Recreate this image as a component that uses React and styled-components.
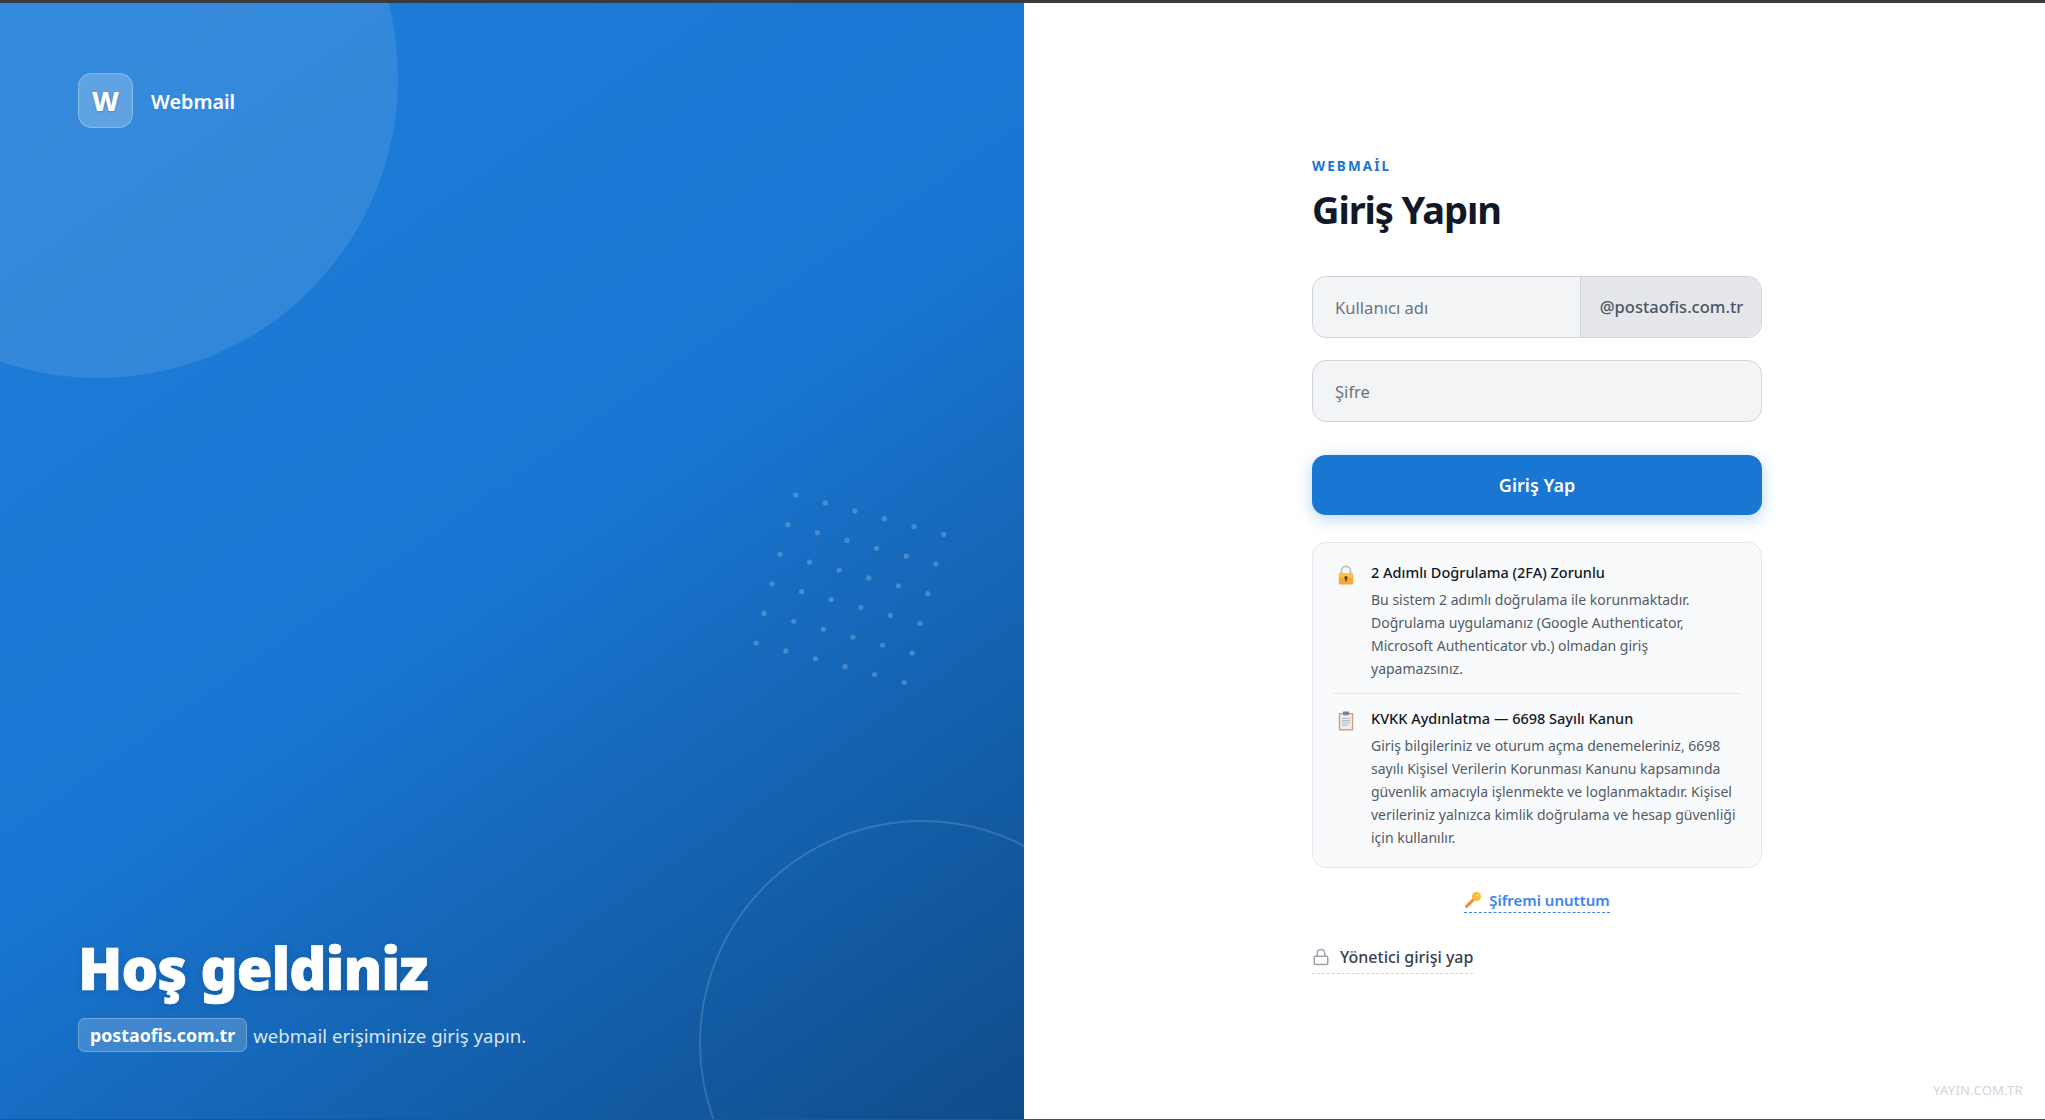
import styled, { createGlobalStyle } from 'styled-components';

const GlobalStyle = createGlobalStyle`
  * {
    box-sizing: border-box;
  }

  html,
  body {
    margin: 0;
    padding: 0;
    background: #fff;
  }

  body {
    font-family: 'Noto Sans', 'Open Sans', sans-serif;
  }
`;

const Page = styled.div`
  display: flex;
  flex-direction: column;
  height: 100vh;
  overflow: hidden;
`;

const TopStrip = styled.div`
  flex: none;
  height: 3px;
  background: #3a3b3c;
`;

const BottomStrip = styled.div`
  flex: none;
  height: 1px;
  background: #3f5a2c;
`;

const Split = styled.main`
  flex: 1;
  display: flex;
  min-height: 0;
`;

const Hero = styled.section`
  position: relative;
  flex: none;
  width: 1024px;
  display: flex;
  flex-direction: column;
  justify-content: space-between;
  padding: 70px 78px 67px;
  overflow: hidden;
  color: #fff;
  background: linear-gradient(145deg, #1e7ed9 0%, #1976d2 50%, #0f4c8a 100%);
`;

const BigCircle = styled.div`
  position: absolute;
  top: -225px;
  left: -202px;
  width: 600px;
  height: 600px;
  border-radius: 50%;
  background: rgba(255, 255, 255, 0.1);
`;

const RingCircle = styled.div`
  position: absolute;
  top: 817px;
  left: 699px;
  width: 446px;
  height: 446px;
  border-radius: 50%;
  border: 2px solid rgba(255, 255, 255, 0.15);
`;

const Dots = styled.svg`
  position: absolute;
  top: 467px;
  left: 730px;
  width: 240px;
  height: 230px;
`;

const Brand = styled.div`
  position: relative;
  display: flex;
  align-items: center;
  gap: 18px;
`;

const LogoBox = styled.div`
  width: 55px;
  height: 55px;
  display: flex;
  align-items: center;
  justify-content: center;
  border-radius: 14px;
  border: 1.5px solid rgba(255, 255, 255, 0.25);
  background: rgba(255, 255, 255, 0.22);
  font-size: 27px;
  font-weight: 800;
  text-shadow: 0 1px 3px rgba(0, 0, 0, 0.2);
`;

const BrandName = styled.span`
  padding-top: 2px;
  font-size: 19.8px;
  font-weight: 600;
`;

const Welcome = styled.div`
  position: relative;
`;

const WelcomeTitle = styled.h1`
  margin: 0 0 12px;
  font-size: 58px;
  line-height: 76px;
  font-weight: 900;
  letter-spacing: -1px;
  -webkit-text-stroke: 0.7px #fff;
  text-shadow: 0 2px 8px rgba(0, 0, 0, 0.15);
`;

const WelcomeText = styled.p`
  display: flex;
  align-items: center;
  gap: 6px;
  margin: 0;
  font-size: 18.6px;
  color: rgba(255, 255, 255, 0.85);
`;

const DomainPill = styled.span`
  padding: 4px 11px;
  border-radius: 7px;
  border: 1px solid rgba(255, 255, 255, 0.25);
  background: rgba(255, 255, 255, 0.18);
  font-size: 17.8px;
  font-weight: 700;
  color: #fff;
`;

const FormSide = styled.section`
  position: relative;
  flex: 1;
  display: flex;
  justify-content: center;
  padding: 154px 0 0 5px;
  background: #fff;
`;

const Form = styled.form`
  width: 450px;
`;

const Eyebrow = styled.div`
  font-size: 13.5px;
  line-height: 18px;
  font-weight: 700;
  letter-spacing: 2.1px;
  color: #1976d2;
`;

const Title = styled.h2`
  margin: 6px 0 38.5px;
  font-size: 38px;
  line-height: 56px;
  font-weight: 700;
  letter-spacing: -1.1px;
  color: #111827;
`;

const Field = styled.div`
  display: flex;
  height: 62px;
  margin-bottom: 22px;
  border-radius: 14px;
  border: 1.5px solid #d1d5db;
  background: #f3f4f6;
  overflow: hidden;
`;

const Input = styled.input`
  flex: 1;
  min-width: 0;
  padding: 2px 22px 0;
  border: 0;
  outline: 0;
  background: transparent;
  font-family: inherit;
  font-size: 16.6px;
  color: #111827;

  &::placeholder {
    color: #6b7280;
    opacity: 1;
  }
`;

const DomainSuffix = styled.div`
  flex: none;
  width: 181px;
  display: flex;
  align-items: center;
  justify-content: center;
  padding-left: 1px;
  border-left: 1.5px solid #d1d5db;
  background: #e5e7eb;
  font-size: 16.5px;
  font-weight: 500;
  color: #4b5563;
`;

const SubmitButton = styled.button`
  display: block;
  width: 100%;
  height: 60px;
  margin-top: 33px;
  border: 0;
  border-radius: 14px;
  background: #1976d2;
  box-shadow: 0 4px 16px rgba(25, 118, 210, 0.3);
  font-family: inherit;
  font-size: 18px;
  font-weight: 600;
  color: #fff;
`;

const NoticeCard = styled.div`
  margin-top: 27px;
  padding: 16px 20px 18px;
  border-radius: 14px;
  border: 1.5px solid #e5e7eb;
  background: #f9fafb;
`;

const Notice = styled.div`
  display: flex;
  gap: 16px;
  padding: ${props => (props.$first ? '2px 0 13px' : '13px 0 0')};
  border-top: ${props => (props.$first ? '0' : '1px solid #e5e7eb')};
`;

const NoticeIcon = styled.svg`
  flex: none;
  width: 18px;
  height: 20px;
  margin: 4px 0 0 4px;
`;

const NoticeTitle = styled.div`
  margin-bottom: 5px;
  font-size: 14.5px;
  line-height: 22px;
  font-weight: 500;
  color: #111827;
`;

const NoticeBody = styled.p`
  margin: 0;
  font-size: 14px;
  line-height: 23px;
  color: #525a68;
`;

const ForgotRow = styled.div`
  display: flex;
  justify-content: center;
  margin-top: 22px;
`;

const ForgotLink = styled.a`
  display: flex;
  align-items: center;
  gap: 7px;
  padding-bottom: 2px;
  border-bottom: 1.5px dashed #4080f5;
  font-size: 15px;
  font-weight: 600;
  color: #4080f5;
`;

const KeyIcon = styled.svg`
  width: 18px;
  height: 18px;
`;

const AdminRow = styled.div`
  display: flex;
  margin-top: 33px;
`;

const AdminLink = styled.a`
  display: flex;
  align-items: center;
  gap: 10px;
  padding-bottom: 5px;
  border-bottom: 1.5px dashed #d1d5db;
  font-size: 16px;
  font-weight: 500;
  color: #374151;
`;

const LockIcon = styled.svg`
  width: 18px;
  height: 18px;
  fill: none;
  stroke: #9ca3af;
  stroke-width: 2;
  stroke-linecap: round;
  stroke-linejoin: round;
`;

const Credit = styled.div`
  position: absolute;
  right: 22px;
  bottom: 20px;
  font-size: 13px;
  letter-spacing: 0.3px;
  color: #d1d5db;
`;

const dotPoints = [];
for (let row = 0; row < 6; row += 1) {
  for (let col = 0; col < 6; col += 1) {
    dotPoints.push({
      key: `${row}-${col}`,
      cx: 65.7 + col * 29.6 - row * 7.9,
      cy: 25 + col * 7.9 + row * 29.6,
    });
  }
}

function PadlockEmoji() {
  return (
    <NoticeIcon viewBox="0 0 20 22">
      <path d="M5 10V6.5a5 5 0 0 1 10 0V10" fill="none" stroke="#b9bdc4" strokeWidth="2" />
      <rect x="2" y="9" width="16" height="12.5" rx="1" fill="#f7a83a" />
      <rect x="2" y="9" width="16" height="5" rx="1" fill="#fbc344" />
      <circle cx="10" cy="14" r="1.8" fill="#5b3a16" />
      <rect x="9.2" y="14" width="1.6" height="4" fill="#5b3a16" />
    </NoticeIcon>
  );
}

function ClipboardEmoji() {
  return (
    <NoticeIcon viewBox="0 0 20 22">
      <rect x="2" y="2" width="16" height="19.5" rx="1" fill="#d99a73" />
      <rect x="3.5" y="3.5" width="13" height="16.5" fill="#eceef0" />
      <rect x="6.5" y="0.5" width="7" height="4" rx="1" fill="#7d8590" />
      <path d="M5.5 8h9M5.5 10.5h9M5.5 13h9M5.5 15.5h7" stroke="#a9afb8" strokeWidth="1" />
    </NoticeIcon>
  );
}

export default function App() {
  return (
    <>
      <GlobalStyle />
      <Page>
        <TopStrip />
        <Split>
          <Hero>
            <BigCircle />
            <RingCircle />
            <Dots viewBox="0 0 240 230">
              {dotPoints.map(dot => (
                <circle
                  key={dot.key}
                  cx={dot.cx}
                  cy={dot.cy}
                  r="2.6"
                  fill="rgba(255, 255, 255, 0.22)"
                />
              ))}
            </Dots>
            <Brand>
              <LogoBox>W</LogoBox>
              <BrandName>Webmail</BrandName>
            </Brand>
            <Welcome>
              <WelcomeTitle>Hoş geldiniz</WelcomeTitle>
              <WelcomeText>
                <DomainPill>postaofis.com.tr</DomainPill>
                webmail erişiminize giriş yapın.
              </WelcomeText>
            </Welcome>
          </Hero>
          <FormSide>
            <Form>
              <Eyebrow>WEBMAİL</Eyebrow>
              <Title>Giriş Yapın</Title>
              <Field>
                <Input placeholder="Kullanıcı adı" />
                <DomainSuffix>@postaofis.com.tr</DomainSuffix>
              </Field>
              <Field>
                <Input type="password" placeholder="Şifre" />
              </Field>
              <SubmitButton type="button">Giriş Yap</SubmitButton>
              <NoticeCard>
                <Notice $first>
                  <PadlockEmoji />
                  <div>
                    <NoticeTitle>2 Adımlı Doğrulama (2FA) Zorunlu</NoticeTitle>
                    <NoticeBody>
                      Bu sistem 2 adımlı doğrulama ile korunmaktadır. Doğrulama
                      uygulamanız (Google Authenticator, Microsoft Authenticator
                      vb.) olmadan giriş yapamazsınız.
                    </NoticeBody>
                  </div>
                </Notice>
                <Notice>
                  <ClipboardEmoji />
                  <div>
                    <NoticeTitle>KVKK Aydınlatma — 6698 Sayılı Kanun</NoticeTitle>
                    <NoticeBody>
                      Giriş bilgileriniz ve oturum açma denemeleriniz, 6698
                      sayılı Kişisel Verilerin Korunması Kanunu kapsamında
                      güvenlik amacıyla işlenmekte ve loglanmaktadır. Kişisel
                      verileriniz yalnızca kimlik doğrulama ve hesap güvenliği
                      için kullanılır.
                    </NoticeBody>
                  </div>
                </Notice>
              </NoticeCard>
              <ForgotRow>
                <ForgotLink>
                  <KeyIcon viewBox="0 0 18 18">
                    <path d="M11 7L2.5 15.5" stroke="#ef8a3c" strokeWidth="3" strokeLinecap="round" />
                    <path d="M4 12l2 2" stroke="#ef8a3c" strokeWidth="2" />
                    <circle cx="12.5" cy="5.5" r="4.5" fill="#fbb934" />
                    <circle cx="13.5" cy="4.5" r="1.2" fill="#fde08a" />
                  </KeyIcon>
                  Şifremi unuttum
                </ForgotLink>
              </ForgotRow>
              <AdminRow>
                <AdminLink>
                  <LockIcon viewBox="0 0 24 24">
                    <rect x="3" y="11" width="18" height="11" rx="2" />
                    <path d="M7 11V7a5 5 0 0 1 10 0v4" />
                  </LockIcon>
                  Yönetici girişi yap
                </AdminLink>
              </AdminRow>
            </Form>
            <Credit>YAYIN.COM.TR</Credit>
          </FormSide>
        </Split>
        <BottomStrip />
      </Page>
    </>
  );
}
